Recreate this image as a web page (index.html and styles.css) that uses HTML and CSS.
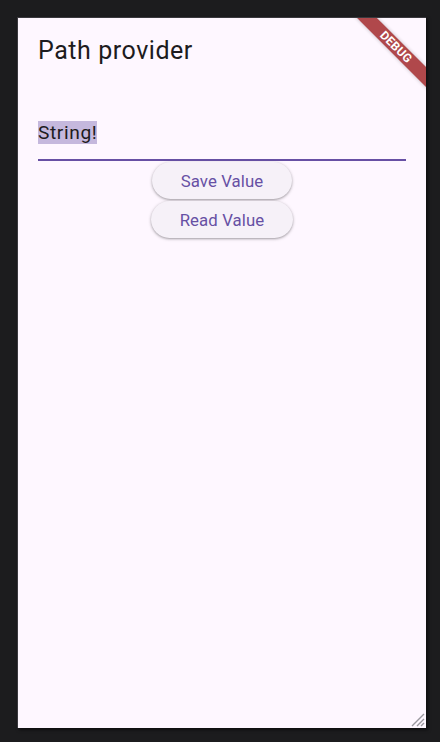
FILE: index.html
```html
<!DOCTYPE html>
<html>
<head>
<meta charset="utf-8">
<link rel="stylesheet" href="styles.css">
</head>
<body>
<div class="window">
  <div class="app">
    <header class="appbar"><h1 class="title">Path provider</h1></header>
    <main class="content">
      <div class="field"><span class="selected">String!</span></div>
      <div class="buttons">
        <button class="btn">Save Value</button>
        <button class="btn">Read Value</button>
      </div>
    </main>
    <div class="banner"><span>DEBUG</span></div>
    <svg class="grip" width="16" height="16" viewBox="0 0 16 16">
      <path d="M15 3 L3 15 M15 8 L8 15 M15 12 L12 15" stroke="#9a979e" stroke-width="1.4" fill="none"/>
    </svg>
  </div>
</div>
</body>
</html>
```

FILE: styles.css
```css
html, body {
  margin: 0;
  padding: 0;
  background: #1c1c1e;
  width: 440px;
  height: 742px;
  overflow: hidden;
}
.window {
  padding: 17px 0 0 17px;
}
.app {
  position: relative;
  width: 408px;
  height: 710px;
  background: #fef7ff;
  border-top: 1px solid #3a393e;
  border-left: 1px solid #3a393e;
  box-shadow: 2px 2px 3px rgba(0,0,0,0.5);
  overflow: hidden;
  font-family: Roboto, "Noto Sans", sans-serif;
}
.appbar {
  height: 64px;
  display: flex;
  align-items: center;
  padding: 2px 20px 0;
  box-sizing: border-box;
}
.title {
  margin: 0;
  font-weight: 400;
  font-size: 25px;
  line-height: 32px;
  letter-spacing: 0.55px;
  color: #1d1b20;
}
.content {
  padding: 0 20px;
}
.field {
  padding-top: 40px;
  height: 37px;
  border-bottom: 2px solid #6750a4;
  font-size: 19.2px;
  line-height: 22px;
  letter-spacing: 0.6px;
  color: #1d1b20;
}
.selected {
  background: #c5b8dd;
}
.buttons {
  display: flex;
  flex-direction: column;
  align-items: center;
  gap: 2px;
  padding-top: 1px;
}
.btn {
  height: 37px;
  padding: 0 29px;
  border: none;
  border-radius: 19px;
  background: #f6f1f8;
  color: #6750a4;
  font-family: Roboto, "Noto Sans", sans-serif;
  font-size: 16.8px;
  letter-spacing: 0.1px;
  box-shadow: 0 1px 2px rgba(0,0,0,0.25), 0 1px 3px 1px rgba(0,0,0,0.1);
}
.banner {
  position: absolute;
  top: 22px;
  right: -30px;
  width: 120px;
  height: 14px;
  background: #b0484b;
  transform: rotate(45deg);
  display: flex;
  align-items: center;
  justify-content: center;
  box-shadow: 0 0 4px rgba(0,0,0,0.25);
}
.banner span {
  color: #fff;
  font-family: Roboto, sans-serif;
  font-weight: 700;
  font-size: 12px;
  line-height: 14px;
  letter-spacing: 0.2px;
}
.grip {
  position: absolute;
  right: 1px;
  bottom: 1px;
}
```
